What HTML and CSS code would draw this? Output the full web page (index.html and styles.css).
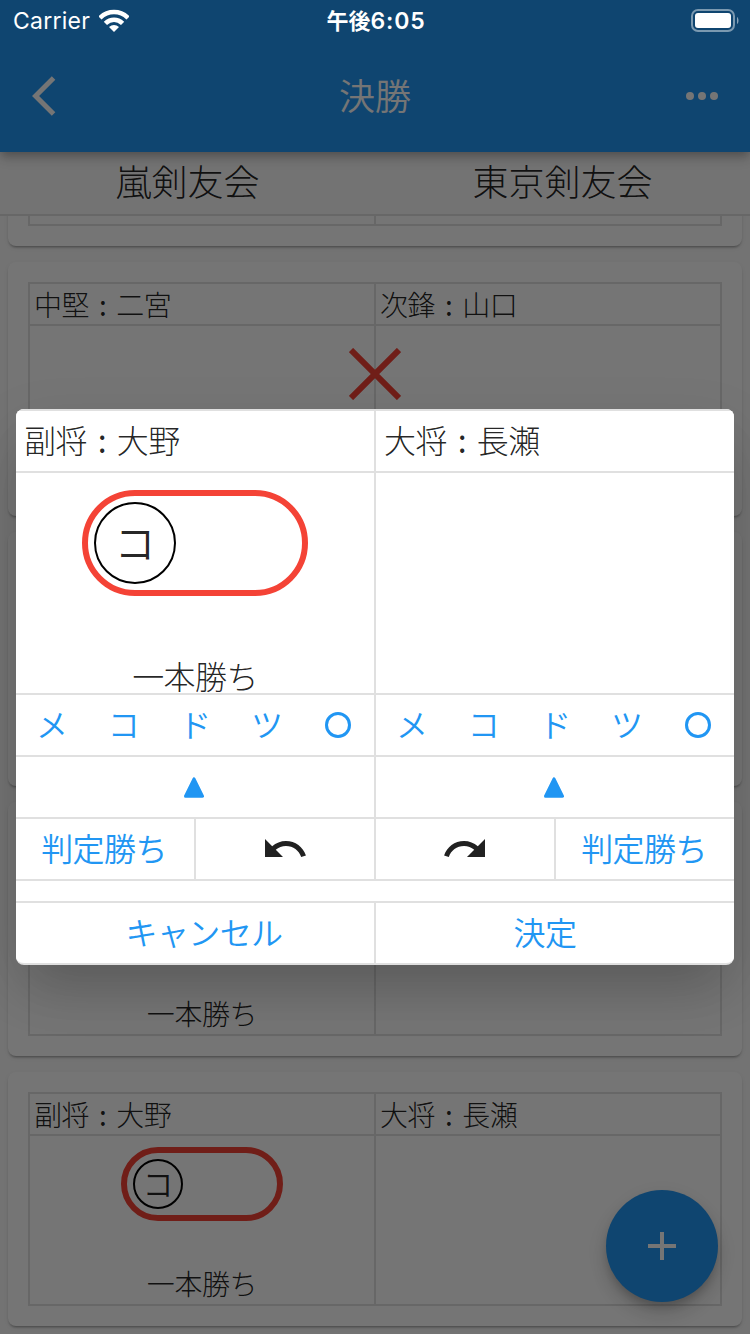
FILE: index.html
```html
<!DOCTYPE html>
<html lang="ja">
<head>
<meta charset="utf-8">
<title>決勝</title>
<link rel="stylesheet" href="styles.css">
</head>
<body>
<div class="screen">
  <header class="appbar">
    <svg class="icon back" viewBox="0 0 24 24"><path d="M11.67 3.87L9.9 2.1 0 12l9.9 9.9 1.77-1.77L3.54 12z"/></svg>
    <h1 class="title">決勝</h1>
    <svg class="icon" viewBox="0 0 24 24"><circle cx="6" cy="12" r="2"/><circle cx="12" cy="12" r="2"/><circle cx="18" cy="12" r="2"/></svg>
  </header>
  <div class="teams"><div>嵐剣友会</div><div>東京剣友会</div></div>
  <main class="list">
    <section class="card"><div class="match">
      <div class="name"></div><div class="name"></div><div class="result"></div><div class="result"></div>
    </div></section>
    <section class="card"><div class="match">
      <div class="name">中堅<span class="sep">:</span>二宮</div><div class="name">次鋒<span class="sep">:</span>山口</div>
      <div class="result"></div><div class="result"></div>
      <svg class="draw" viewBox="0 0 52 52"><path d="M2 2L50 50M50 2L2 50"/></svg>
    </div></section>
    <section class="card"><div class="match">
      <div class="name"></div><div class="name"></div><div class="result"></div><div class="result"></div>
    </div></section>
    <section class="card"><div class="match">
      <div class="name"></div><div class="name"></div>
      <div class="result"><span class="verdict">一本勝ち</span></div><div class="result"></div>
    </div></section>
    <section class="card"><div class="match">
      <div class="name">副将<span class="sep">:</span>大野</div><div class="name">大将<span class="sep">:</span>長瀬</div>
      <div class="result"><div class="capsule"><span class="point">コ</span></div><span class="verdict">一本勝ち</span></div><div class="result"></div>
    </div></section>
  </main>
  <div class="fab"><svg class="icon" viewBox="0 0 24 24"><path d="M19 13h-6v6h-2v-6H5v-2h6V5h2v6h6z"/></svg></div>
</div>

<div class="overlay">
  <div class="dialog">
    <div class="row">
      <div class="cell player">副将<span class="sep">:</span>大野</div>
      <div class="cell player">大将<span class="sep">:</span>長瀬</div>
    </div>
    <div class="row score">
      <div class="cell result"><div class="capsule"><span class="point">コ</span></div><span class="verdict">一本勝ち</span></div>
      <div class="cell"></div>
    </div>
    <div class="row">
      <div class="cell keys"><span>メ</span><span>コ</span><span>ド</span><span>ツ</span><span><i class="ring"></i></span></div>
      <div class="cell keys"><span>メ</span><span>コ</span><span>ド</span><span>ツ</span><span><i class="ring"></i></span></div>
    </div>
    <div class="row">
      <div class="cell"><svg class="triangle" viewBox="0 0 20 21"><path d="M10 1.8L18.5 19.2H1.5z"/></svg></div>
      <div class="cell"><svg class="triangle" viewBox="0 0 20 21"><path d="M10 1.8L18.5 19.2H1.5z"/></svg></div>
    </div>
    <div class="row quarters">
      <div class="cell action">判定勝ち</div>
      <div class="cell"><svg class="icon dark" viewBox="0 0 24 24"><path d="M12.5 8c-2.65 0-5.05.99-6.9 2.6L2 7v9h9l-3.62-3.62c1.39-1.16 3.16-1.88 5.12-1.88 3.54 0 6.55 2.31 7.6 5.5l2.37-.78C21.08 11.03 17.15 8 12.5 8z"/></svg></div>
      <div class="cell"><svg class="icon dark" viewBox="0 0 24 24"><path d="M18.4 10.6C16.55 8.99 14.15 8 11.5 8c-4.65 0-8.58 3.03-9.96 7.22L3.9 16c1.05-3.19 4.05-5.5 7.6-5.5 1.95 0 3.73.72 5.12 1.88L13 16h9V7l-3.6 3.6z"/></svg></div>
      <div class="cell action">判定勝ち</div>
    </div>
    <div class="spacer"></div>
    <div class="row">
      <div class="cell action cancel">キャンセル</div>
      <div class="cell action confirm">決定</div>
    </div>
  </div>
</div>

<div class="statusbar">
  <div class="carrier"><span>Carrier</span>
    <svg class="wifi" viewBox="0 0 30 23">
      <clipPath id="fan"><path d="M15 23L-8 0V-5H38V0z"/></clipPath>
      <g clip-path="url(#fan)"><circle cx="15" cy="22.5" r="19.5" class="arc"/><circle cx="15" cy="22.5" r="11.7" class="arc"/><circle cx="15" cy="22.5" r="6.6" class="dot"/></g>
    </svg>
  </div>
  <div class="clock"><span class="ampm">午後</span>6:05</div>
  <svg class="battery" viewBox="0 0 48 24"><rect x="1" y="1" width="42" height="21" rx="6" class="shell"/><rect x="4" y="4" width="36" height="15" rx="3" class="charge"/><path d="M46 8c2 1 2 6 0 7z" class="nub"/></svg>
</div>
</body>
</html>
```
FILE: styles.css
```css
* { box-sizing: border-box; }
body {
  margin: 0;
  width: 750px;
  height: 1334px;
  overflow: hidden;
  position: relative;
  background: #fafafa;
  color: rgba(0, 0, 0, 0.87);
  font-family: "Noto Sans CJK JP", sans-serif;
  font-weight: 300;
}
.screen { height: 1334px; display: flex; flex-direction: column; position: relative; }
.icon { width: 48px; height: 48px; display: block; fill: #fff; }
.icon.dark { fill: #212121; }

.appbar {
  height: 152px;
  padding: 40px 24px 0 32px;
  display: grid;
  grid-template-columns: 48px 1fr 48px;
  align-items: center;
  flex: none;
  background: #2196f3;
  color: #fff;
  box-shadow: 0 4px 8px -2px rgba(0, 0, 0, 0.2), 0 8px 10px rgba(0, 0, 0, 0.12), 0 2px 16px rgba(0, 0, 0, 0.06);
  z-index: 2;
}
.title { margin: 0; padding: 0 8px 5px 0; font-size: 36px; font-weight: 350; line-height: 54px; text-align: center; }

.teams {
  height: 64px;
  flex: none;
  display: grid;
  grid-template-columns: 1fr 1fr;
  border-bottom: 2px solid #e0e0e0;
  text-align: center;
  font-size: 36px;
  line-height: 56px;
}
.list { flex: 1; min-height: 0; overflow: hidden; padding: 0 8px; display: flex; flex-direction: column; gap: 16px; }
.card {
  height: 254px;
  flex: none;
  padding: 20px;
  border-radius: 8px;
  background: #fff;
  box-shadow: 0 3px 2px -2px rgba(0, 0, 0, 0.2), 0 2px 2px rgba(0, 0, 0, 0.12), 0 2px 5px rgba(0, 0, 0, 0.06);
}
.card:first-child { margin-top: -224px; }
.match {
  position: relative;
  height: 214px;
  display: grid;
  grid-template-columns: 344px 344px;
  grid-template-rows: 40px 168px;
  gap: 2px;
  padding: 2px;
  background: #e0e0e0;
}
.name, .match .result { background: #fff; }
.name { padding-left: 4px; font-size: 28px; line-height: 41px; letter-spacing: -0.4px; white-space: nowrap; }
.sep { display: inline-block; width: 27px; text-align: center; font-weight: 400; }
.result { display: flex; flex-direction: column; align-items: center; justify-content: space-between; }
.match .result { padding-top: 11px; justify-content: flex-start; }
.match .verdict { margin-top: auto; font-size: 28px; line-height: 41px; letter-spacing: -0.4px; }
.draw { position: absolute; left: 321px; top: 66px; width: 52px; height: 52px; stroke: #f44336; stroke-width: 6; }

.capsule { width: 162px; height: 74px; padding: 6px; border: 6px solid #f44336; border-radius: 53px; }
.point {
  display: block;
  width: 50px;
  height: 50px;
  border: 2px solid #000;
  border-radius: 50%;
  text-align: center;
  font-size: 31px;
  font-weight: 350;
  line-height: 43px;
}

.fab {
  position: absolute;
  right: 32px;
  bottom: 32px;
  width: 112px;
  height: 112px;
  border-radius: 50%;
  display: grid;
  place-items: center;
  background: #2196f3;
  box-shadow: 0 6px 10px -2px rgba(0, 0, 0, 0.2), 0 12px 20px rgba(0, 0, 0, 0.14), 0 2px 30px rgba(0, 0, 0, 0.04);
}

.overlay {
  position: absolute;
  inset: 0;
  z-index: 5;
  padding: 40px 16px 0;
  display: flex;
  align-items: center;
  background: rgba(0, 0, 0, 0.54);
}
.dialog {
  flex: 1;
  overflow: hidden;
  border-radius: 8px;
  border-bottom: 2px solid #e0e0e0;
  background: #fff;
  font-size: 32px;
  letter-spacing: -0.6px;
  box-shadow: 0 34px 50px -16px rgba(0, 0, 0, 0.16), 0 20px 60px 0 rgba(0, 0, 0, 0.1);
}
.row {
  display: grid;
  grid-template-columns: 1fr 1fr;
  grid-template-rows: 60px;
  column-gap: 2px;
  padding-top: 2px;
  background: #e0e0e0;
}
.row.score { grid-template-rows: 220px; }
.row.quarters { grid-template-columns: repeat(4, 1fr); }
.cell { background: #fff; display: flex; align-items: center; justify-content: center; line-height: 56px; }
.player { justify-content: flex-start; padding: 0 8px 4px; }
.player .sep { width: 30px; }
.dialog .result { padding-top: 17px; justify-content: space-between; }
.dialog .capsule { width: 226px; height: 106px; }
.dialog .point { width: 82px; height: 82px; font-size: 41px; line-height: 75px; letter-spacing: 0; }
.dialog .verdict { line-height: 36px; }
.action, .keys { color: #2196f3; padding-bottom: 5px; font-weight: 350; }
.action { white-space: nowrap; padding-right: 2px; }
.keys span { flex: 1; display: flex; justify-content: center; align-items: center; }
.ring { width: 26px; height: 26px; margin-top: 5px; border: 3px solid #2196f3; border-radius: 50%; }
.triangle { width: 20px; height: 21px; margin-right: 2px; fill: #2196f3; stroke: #2196f3; stroke-width: 3; stroke-linejoin: round; }
.spacer { height: 22px; border-top: 2px solid #e0e0e0; }
.cancel { padding-left: 20px; }
.confirm { padding-right: 20px; }

.statusbar {
  position: absolute;
  inset: 0 0 auto;
  z-index: 6;
  height: 40px;
  padding: 0 11px 0 13px;
  display: grid;
  grid-template-columns: 1fr auto 1fr;
  align-items: center;
  color: #fff;
  font: 400 23px/40px Inter, "Noto Sans CJK JP", sans-serif;
}
.carrier { display: flex; align-items: center; gap: 9px; letter-spacing: 0.25px; }
.carrier span, .clock { padding-top: 1px; }
.wifi { width: 30px; height: 23px; }
.arc { fill: none; stroke: #fff; stroke-width: 4.6; }
.dot { fill: #fff; }
.clock { font-weight: 600; letter-spacing: 0.8px; }
.ampm { font-size: 22px; font-weight: 700; letter-spacing: 0; }
.battery { width: 48px; height: 24px; justify-self: end; }
.shell { fill: none; stroke: #fff; stroke-opacity: 0.45; stroke-width: 2; }
.charge { fill: #fff; }
.nub { fill: #fff; fill-opacity: 0.5; }
```
